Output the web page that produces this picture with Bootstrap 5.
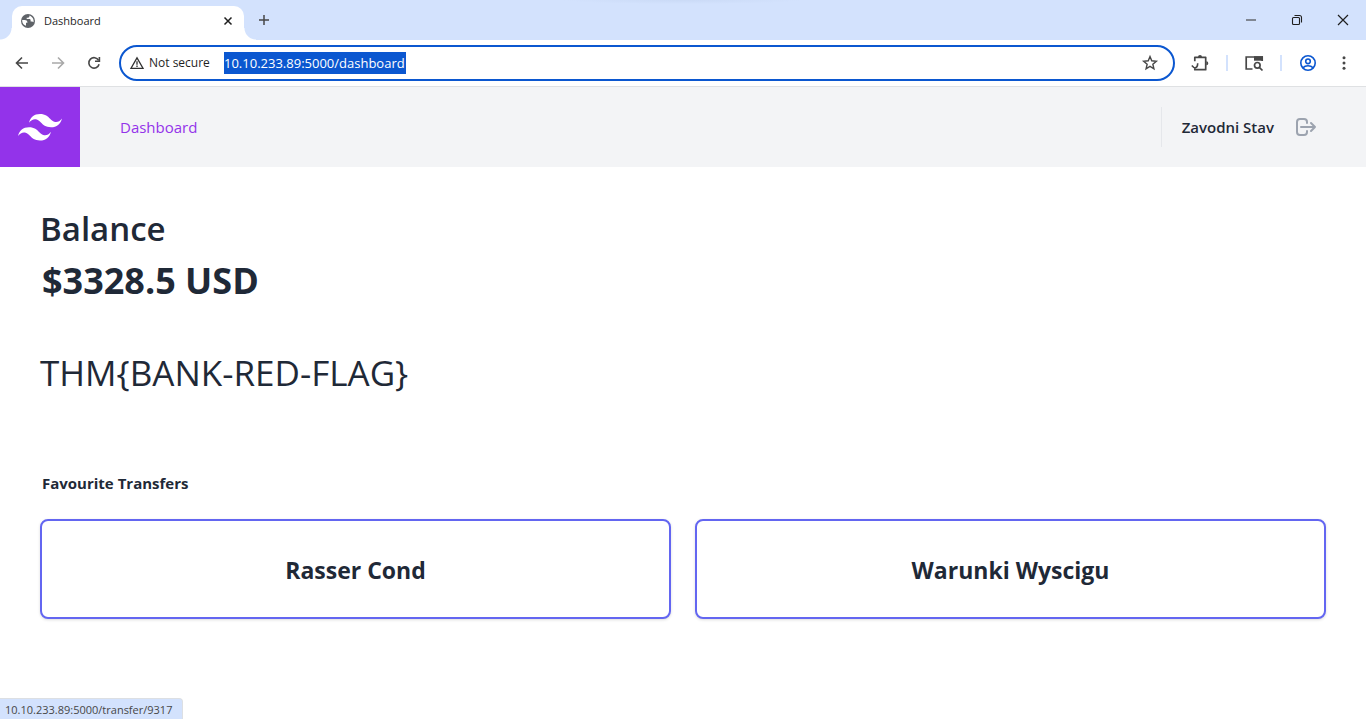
<!DOCTYPE html>
<html lang="en">
<head>
<meta charset="utf-8">
<meta name="viewport" content="width=device-width, initial-scale=1">
<title>Dashboard</title>
<link href="https://cdn.jsdelivr.net/npm/bootstrap@5.3.0/dist/css/bootstrap.min.css" rel="stylesheet">
<script src="https://cdn.jsdelivr.net/npm/bootstrap@5.3.0/dist/js/bootstrap.bundle.min.js" defer></script>
<style>
  :root { --strip: #d3e2fd; --accent: #0b57d0; --ink: #1f2937; --violet: #9333ea; }
  body { font-family: "Open Sans", "Noto Sans", sans-serif; color: var(--ink); background: #fff; }
  button { font: inherit; }
  svg { display: block; flex: none; }
  .icon-btn { border: 0; background: none; padding: 0; display: grid; place-items: center; color: #474747; }

  /* Browser frame */
  .tab-strip { height: 40px; background: radial-gradient(120px 4px at 50% 0, #cadaf6, transparent) var(--strip); font-size: 12px; }
  .browser-tab { position: relative; width: 232px; height: 34px; margin-left: 12px; padding: 0 10px 4px 8px; background: #fff; border-radius: 10px 10px 0 0; color: #1f1f1f; }
  .browser-tab::before, .browser-tab::after { content: ""; position: absolute; bottom: 0; width: 12px; height: 12px; }
  .browser-tab::before { left: -12px; background: radial-gradient(circle at 0 0, transparent 11px, #fff 12px); }
  .browser-tab::after { right: -12px; background: radial-gradient(circle at 100% 0, transparent 11px, #fff 12px); }
  .tab-title { font-size: 11px; }
  .strip-btn { width: 40px; height: 40px; }
  .win-btn { width: 46px; height: 40px; color: #1f1f1f; }
  .toolbar { height: 47px; padding: 0 5px 0 4px; background: #fff; border-bottom: 1px solid #dfe1e3; }
  .nav-btn { width: 36px; height: 36px; }
  .omnibox { height: 36px; margin-left: 7px; border: 2px solid var(--accent); border-radius: 18px; padding: 0 14px 0 8px; }
  .site-note { width: 64px; margin-left: 4px; font-size: 12px; color: #1f1f1f; white-space: nowrap; }
  .url-field { width: 182px; height: 22px; padding: 0; margin-left: 11px; border: 0; outline: 0; background: var(--accent); color: #fff; font-size: 13px; }
  .bar-sep { width: 2px; height: 16px; margin: 0 9px; background: var(--strip); }
  .tool-btn { width: 34px; height: 36px; }
  .menu-btn { margin-left: 2px; }

  /* Application */
  .app-header { height: 80px; background: #f3f4f6; }
  .brand { width: 80px; height: 80px; background: var(--violet); display: grid; place-items: center; }
  .main-link { color: var(--violet); font-size: 15px; margin-left: 40px; text-decoration: none; }
  .user-box { height: 40px; border-left: 1px solid #e5e7eb; padding-left: 20px; margin-right: 48px; gap: 20px; }
  .user-name { font-size: 15px; font-weight: 600; }
  .page { padding: 36px 40px; }
  .balance-label { font-size: 33px; line-height: 52px; font-weight: 600; }
  .balance-sum { font-size: 36px; line-height: 52px; font-weight: 700; padding-left: 2px; }
  .flag-text { font-size: 35px; line-height: 52px; font-weight: 400; margin: 40px 0 0; }
  .section-title { font-size: 15px; line-height: 24px; font-weight: 700; padding-left: 2px; margin: 72px 0 24px; }
  .transfer { height: 100px; padding-top: 4px; border: 2px solid #6366f1; border-radius: 8px; background: #fff; color: var(--ink); font-size: 23px; font-weight: 700; box-shadow: 0 1px 3px rgba(0,0,0,.14); }
  .status-bubble { height: 21px; padding: 0 10px 0 5px; background: var(--strip); border: solid #dcdfe3; border-width: 1px 1px 0 0; border-top-right-radius: 4px; color: #474747; font-size: 11px; line-height: 21px; }
</style>
</head>
<body class="d-flex flex-column min-vh-100">
<div class="tab-strip d-flex align-items-center">
  <div class="browser-tab d-flex align-items-center align-self-end">
    <svg width="16" height="16" viewBox="0 0 16 16"><circle cx="8" cy="8" r="7" fill="#5f6368"/><path d="M2.200 7h2.600c1.500 0 2.600.8 2.600 2.200v.6h-1.400v2.900C3.700 12 2.200 10.200 2.200 8zM9.400 2.400v.9c0 .8-.6 1.400-1.400 1.400H6.700v1.400h2.600c.7 0 1.300.5 1.300 1.200v1.100h1.200c.8 0 1.300.3 1.700.9.600-2.900-.9-5.800-4.100-6.900z" fill="#fff"/></svg>
    <span class="tab-title ms-2 me-auto">Dashboard</span>
    <button class="icon-btn" aria-label="Close tab"><svg width="12" height="12" viewBox="0 0 12 12"><path d="M2.500 2.500l7 7M9.500 2.500l-7 7" stroke="#1f1f1f" stroke-width="1.500"/></svg></button>
  </div>
  <button class="icon-btn strip-btn" aria-label="New tab"><svg width="12" height="12" viewBox="0 0 12 12"><path d="M6 1v10M1 6h10" stroke="#474747" stroke-width="1.500"/></svg></button>
  <div class="d-flex ms-auto">
    <button class="icon-btn win-btn" aria-label="Minimize"><svg width="12" height="12" viewBox="0 0 12 12"><path d="M1 6h10" stroke="#6b7078" stroke-width="1.600"/></svg></button>
    <button class="icon-btn win-btn" aria-label="Restore"><svg width="12" height="12" viewBox="0 0 12 12" fill="none" stroke="currentColor" stroke-width="1.100"><rect x="1.500" y="3.500" width="7" height="7" rx="1"/><path d="M3.500 1.500h5a2 2 0 0 1 2 2v5"/></svg></button>
    <button class="icon-btn win-btn" aria-label="Close"><svg width="12" height="12" viewBox="0 0 12 12"><path d="M1 1l10 10M11 1L1 11" stroke="currentColor" stroke-width="1.200"/></svg></button>
  </div>
</div>

<div class="toolbar d-flex align-items-center">
  <button class="icon-btn nav-btn" aria-label="Back"><svg width="16" height="16" viewBox="0 0 16 16"><path d="M14 8H3M8 2.500L2.500 8 8 13.500" fill="none" stroke="currentColor" stroke-width="1.600"/></svg></button>
  <button class="icon-btn nav-btn" aria-label="Forward" disabled><svg width="16" height="16" viewBox="0 0 16 16"><path d="M2 8h11M8 2.500L13.500 8 8 13.500" fill="none" stroke="#a9a9a9" stroke-width="1.600"/></svg></button>
  <button class="icon-btn nav-btn" aria-label="Reload"><svg width="16" height="16" viewBox="0 0 16 16"><path d="M12.600 5.300A5.200 5.200 0 1 0 13.100 9.200" fill="none" stroke="currentColor" stroke-width="1.600"/><path d="M13.400 2v4.300H9" fill="none" stroke="currentColor" stroke-width="1.600"/></svg></button>
  <div class="omnibox d-flex align-items-center flex-grow-1">
    <svg width="16" height="16" viewBox="0 0 16 16"><path d="M8 2.900L14 13.300H2z" fill="none" stroke="#303030" stroke-width="1.300"/><path d="M8 6.300v3.500M8 10.600v1.400" stroke="#303030" stroke-width="1.300"/></svg>
    <label class="site-note" for="address">Not secure</label>
    <input class="url-field" id="address" type="text" value="10.10.233.89:5000/dashboard" spellcheck="false">
    <button class="icon-btn ms-auto" aria-label="Bookmark"><svg width="18" height="18" viewBox="0 0 18 18"><path d="M9 2.500l1.750 4.300 4.600.4-3.500 3.050 1.050 4.550L9 12.400l-3.900 2.400 1.050-4.550L2.650 7.200l4.600-.4z" fill="none" stroke="currentColor" stroke-width="1.400"/></svg></button>
  </div>
  <div class="d-flex align-items-center ms-2">
    <button class="icon-btn tool-btn" aria-label="Extensions"><svg width="20" height="20" viewBox="0 0 20 20"><path d="M4.800 8.200V4.300h10.900v12.400H4.800v-1.500" fill="none" stroke="currentColor" stroke-width="1.700" stroke-linejoin="round"/><path d="M8 4a2 2 0 0 1 4 0zM16.300 8.300a2 2 0 0 1 0 4z" fill="currentColor"/><path d="M1.800 12.500l2.300 2.300M4 15c3 0 3.700-2 3.700-4.800" fill="none" stroke="currentColor" stroke-width="1.600"/></svg></button>
    <span class="bar-sep"></span>
    <button class="icon-btn tool-btn" aria-label="Search side panel"><svg width="20" height="18" viewBox="0 0 20 18"><path d="M8.500 15H2.200V3h16v4" fill="none" stroke="currentColor" stroke-width="1.700"/><path d="M10 2.200h9v4.500h-9z" fill="currentColor"/><circle cx="13.300" cy="11.300" r="2.800" fill="none" stroke="currentColor" stroke-width="1.700"/><path d="M15.300 13.300l3.200 3.200" stroke="currentColor" stroke-width="1.700"/></svg></button>
    <span class="bar-sep"></span>
    <button class="icon-btn tool-btn" aria-label="Profile"><svg width="18" height="18" viewBox="0 0 18 18" fill="none" stroke="#0b57d0" stroke-width="1.600"><circle cx="9" cy="9" r="7.200"/><circle cx="9" cy="7.300" r="2.300"/><path d="M3.800 13.900c2.800-2.900 7.600-2.900 10.400 0"/></svg></button>
    <button class="icon-btn tool-btn menu-btn" aria-label="Menu"><svg width="16" height="16" viewBox="0 0 16 16" fill="currentColor"><circle cx="8" cy="2.700" r="1.500"/><circle cx="8" cy="8" r="1.500"/><circle cx="8" cy="13.300" r="1.500"/></svg></button>
  </div>
</div>

<header class="app-header d-flex align-items-center">
  <a class="brand" href="#" aria-label="Home"><svg width="44" height="27" viewBox="0 0 54 33" fill="#fff"><path d="M27 0c-7.200 0-11.700 3.600-13.500 10.800 2.700-3.600 5.850-4.950 9.450-4.050 2.054.513 3.522 2.004 5.147 3.653C30.744 13.090 33.808 16.200 40.500 16.200c7.200 0 11.700-3.600 13.500-10.800-2.700 3.600-5.850 4.950-9.450 4.050-2.054-.513-3.522-2.004-5.147-3.653C36.756 3.110 33.692 0 27 0zM13.500 16.200C6.300 16.200 1.800 19.800 0 27c2.700-3.600 5.850-4.950 9.450-4.050 2.054.514 3.522 2.004 5.147 3.653C17.244 29.290 20.308 32.400 27 32.400c7.200 0 11.700-3.600 13.500-10.800-2.700 3.600-5.850 4.950-9.450 4.050-2.054-.513-3.522-2.004-5.147-3.653C23.256 19.310 20.192 16.200 13.500 16.200z"/></svg></a>
  <nav><a class="main-link" href="#">Dashboard</a></nav>
  <div class="user-box d-flex align-items-center ms-auto">
    <span class="user-name">Zavodni Stav</span>
    <button class="icon-btn" aria-label="Log out"><svg width="24" height="24" viewBox="0 0 24 24" fill="none" stroke="#9ca3af" stroke-width="2" stroke-linecap="round" stroke-linejoin="round"><path d="M17 16l4-4m0 0l-4-4m4 4H7m6 4v1a3 3 0 01-3 3H6a3 3 0 01-3-3V7a3 3 0 013-3h4a3 3 0 013 3v1"/></svg></button>
  </div>
</header>

<main class="page">
  <h1 class="balance-label mb-0">Balance</h1>
  <p class="balance-sum mb-0">$3328.5 USD</p>
  <p class="flag-text">THM{BANK-RED-FLAG}</p>
  <h2 class="section-title">Favourite Transfers</h2>
  <div class="row g-4">
    <div class="col-6"><button class="transfer w-100">Rasser Cond</button></div>
    <div class="col-6"><button class="transfer w-100">Warunki Wyscigu</button></div>
  </div>
</main>

<footer class="d-flex mt-auto"><div class="status-bubble">10.10.233.89:5000/transfer/9317</div></footer>
</body>
</html>
